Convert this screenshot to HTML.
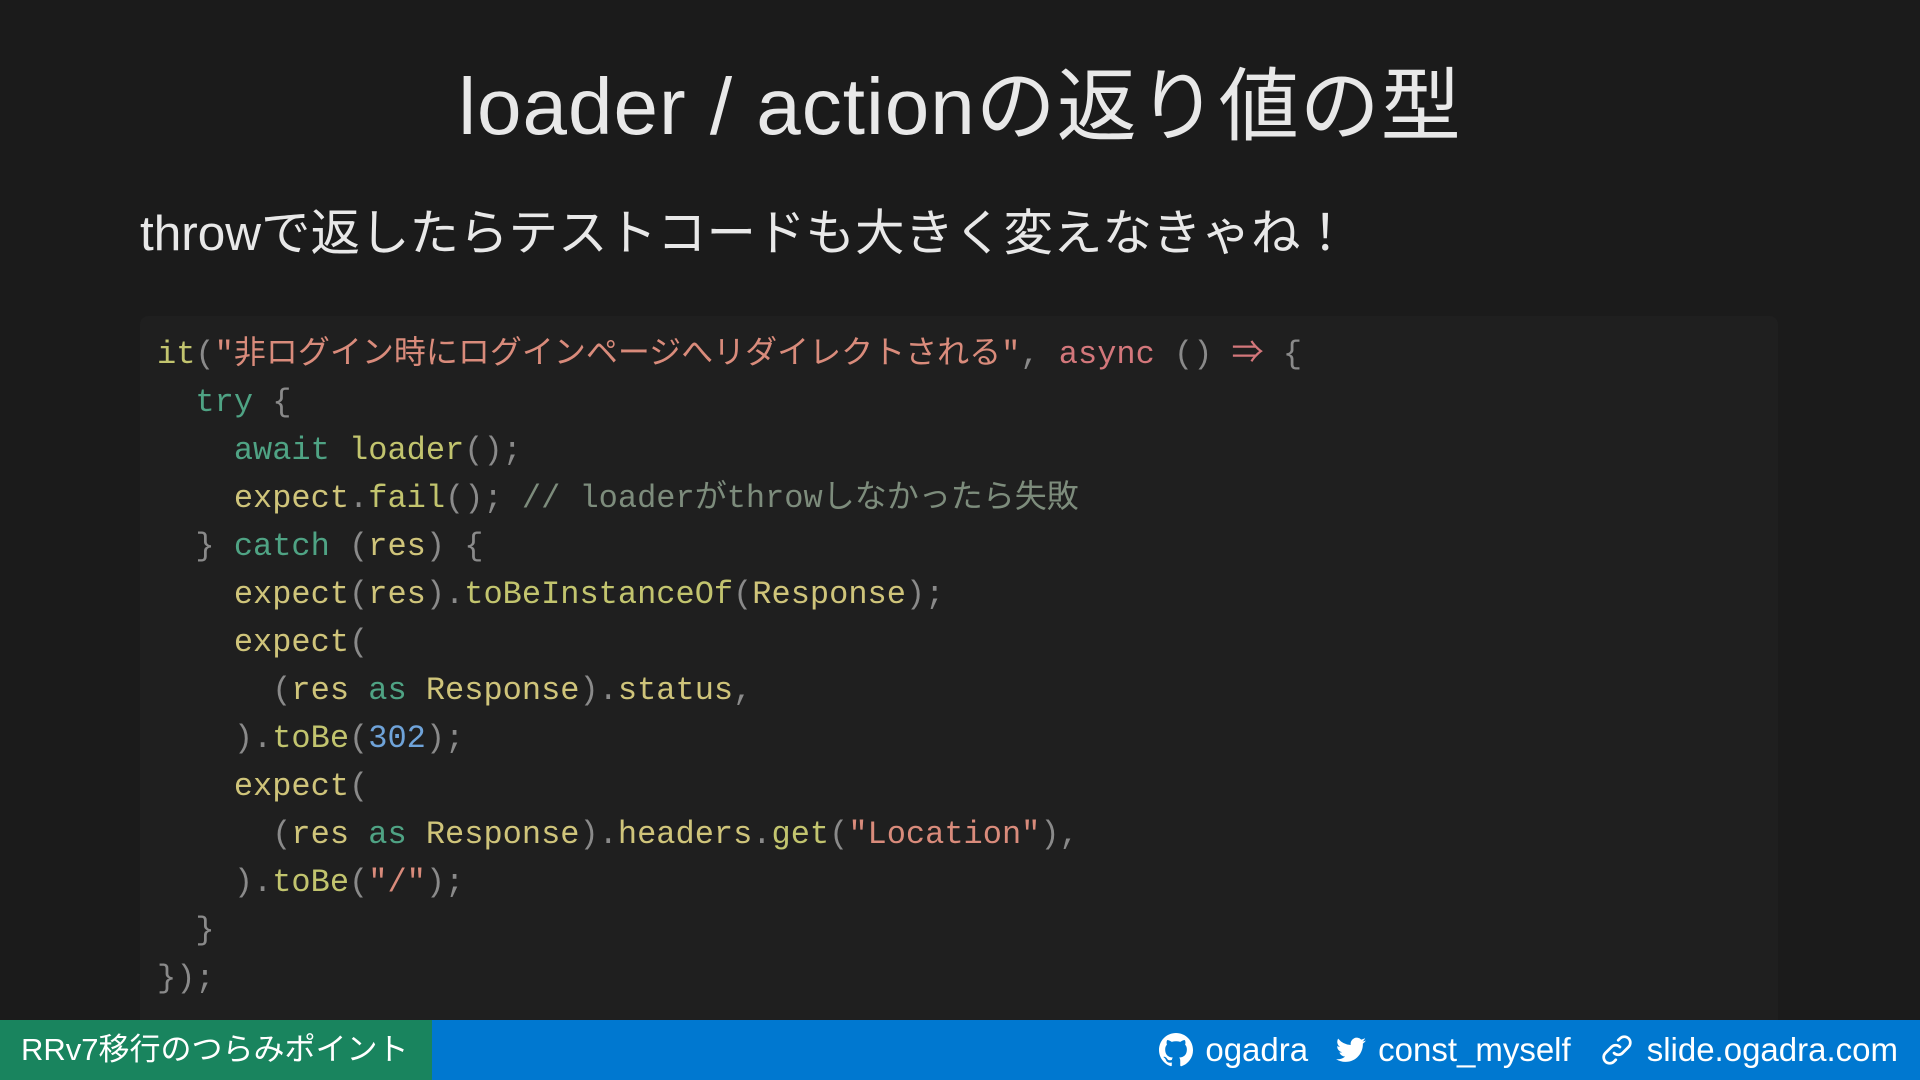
<!DOCTYPE html>
<html><head><meta charset="utf-8"><style>
html,body{margin:0;padding:0;}
body{width:1920px;height:1080px;background:#1b1b1b;position:relative;overflow:hidden;font-family:"Liberation Sans","Noto Sans CJK JP",sans-serif;color:#e6e6e6;}
h1{position:absolute;top:52px;left:0;width:1920px;text-align:center;margin:0;font-weight:normal;font-size:80px;letter-spacing:1px;line-height:110px;color:#e8e8e8;white-space:nowrap;}
.sub{position:absolute;left:140px;top:204px;font-size:49.5px;line-height:60px;color:#e8e8e8;white-space:nowrap;}
.code{position:absolute;left:140px;top:316px;width:1638px;height:720px;background:#1f1f1f;border-radius:8px;}
pre{margin:0;position:absolute;left:157px;top:331px;font-family:"Liberation Mono","Noto Sans CJK JP",monospace;font-size:32px;line-height:48px;color:#8a8a8a;}
.f{color:#c2c46e}.k{color:#4fa384}.s{color:#d98b7b}.a{color:#d3777b}.c{color:#7d8c7c}.n{color:#6fa3d9}.v{color:#cfc47a}
.foot{position:absolute;left:0;top:1020px;width:1920px;height:60px;background:#0078d0;}
.tag{position:absolute;left:0;top:0;width:432px;height:60px;background:#19845e;color:#fff;font-size:31px;line-height:60px;padding-left:21px;box-sizing:border-box;white-space:nowrap;overflow:hidden;}
.r{position:absolute;right:22px;top:0;height:60px;display:flex;align-items:center;color:#fff;font-size:33px;white-space:nowrap;}
.r span{margin-right:28px;display:flex;align-items:center}
.r svg{margin-right:12px}
</style></head><body>
<h1>loader / actionの返り値の型</h1>
<div class="sub">throwで返したらテストコードも大きく変えなきゃね！</div>
<div class="code"></div>
<pre><span class="f">it</span>(<span class="s">"非ログイン時にログインページへリダイレクトされる"</span>, <span class="a">async</span> () <span class="a">⇒</span> {
  <span class="k">try</span> {
    <span class="k">await</span> <span class="f">loader</span>();
    <span class="v">expect</span>.<span class="f">fail</span>(); <span class="c">// loaderがthrowしなかったら失敗</span>
  } <span class="k">catch</span> (<span class="v">res</span>) {
    <span class="v">expect</span>(<span class="v">res</span>).<span class="f">toBeInstanceOf</span>(<span class="v">Response</span>);
    <span class="v">expect</span>(
      (<span class="v">res</span> <span class="k">as</span> <span class="v">Response</span>).<span class="v">status</span>,
    ).<span class="f">toBe</span>(<span class="n">302</span>);
    <span class="v">expect</span>(
      (<span class="v">res</span> <span class="k">as</span> <span class="v">Response</span>).<span class="v">headers</span>.<span class="f">get</span>(<span class="s">"Location"</span>),
    ).<span class="f">toBe</span>(<span class="s">"/"</span>);
  }
});</pre>
<div class="foot">
<div class="tag">RRv7移行のつらみポイント</div>
<div class="r">
<span><svg width="34" height="34" viewBox="0 0 16 16"><path fill="#fff" d="M8 0C3.58 0 0 3.58 0 8c0 3.54 2.290 6.530 5.470 7.590.4.07.55-.17.55-.38v-1.330c-2.230.48-2.700-1.070-2.700-1.070-.36-.92-.89-1.170-.89-1.170-.73-.5.06-.49.06-.49.8.06 1.230.83 1.230.83.71 1.220 1.870.87 2.330.66.07-.52.28-.87.51-1.070-1.780-.2-3.650-.89-3.650-3.950 0-.87.31-1.590.82-2.150-.08-.2-.36-1.020.08-2.120 0 0 .67-.21 2.200.82a7.600 7.600 0 014 0c1.530-1.040 2.200-.82 2.200-.82.44 1.100.16 1.920.08 2.120.51.56.82 1.270.82 2.150 0 3.070-1.870 3.750-3.650 3.950.29.25.54.73.54 1.480v2.200c0 .21.15.46.55.38A8 8 0 0016 8c0-4.420-3.580-8-8-8z"/></svg>ogadra</span>
<span><svg width="30" height="26" viewBox="0 0 24 20"><path fill="#fff" d="M24 2.4a9.8 9.8 0 01-2.8.8A4.9 4.9 0 0023.3.5a9.9 9.9 0 01-3.1 1.2A4.9 4.9 0 0011.8 6 14 14 0 011.7.9a4.9 4.9 0 001.5 6.6A4.9 4.9 0 01.9 6.9a4.9 4.9 0 004 4.9 4.9 4.9 0 01-2.2.1 4.9 4.9 0 004.6 3.4A9.9 9.9 0 010 17.3 14 14 0 007.5 19.5c9.1 0 14-7.5 14-14v-.6A10 10 0 0024 2.4z"/></svg>const_myself</span>
<span style="margin-right:0"><svg width="36" height="36" viewBox="0 0 24 24" fill="none" stroke="#fff" stroke-width="1.8" stroke-linecap="round"><path d="M10 14a4 4 0 005.7 0l4-4a4 4 0 00-5.7-5.7l-1.2 1.2"/><path d="M14 10a4 4 0 00-5.7 0l-4 4a4 4 0 005.7 5.7l1.2-1.2"/></svg>slide.ogadra.com</span>
</div></div>
</body></html>
